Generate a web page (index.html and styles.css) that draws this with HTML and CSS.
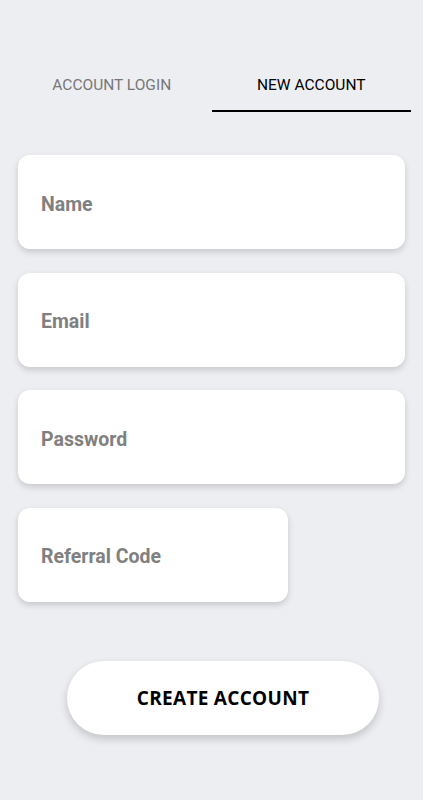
FILE: index.html
```html
<!DOCTYPE html>
<html lang="en">
<head>
<meta charset="utf-8">
<title>New Account</title>
<link rel="stylesheet" href="styles.css">
</head>
<body>
<div class="page">
  <nav class="tabs">
    <div class="tab">ACCOUNT LOGIN</div>
    <div class="tab tab-active">NEW ACCOUNT</div>
  </nav>
  <form class="form">
    <input class="field" type="text" placeholder="Name">
    <input class="field" type="email" placeholder="Email">
    <input class="field" type="password" placeholder="Password">
    <input class="field field-short" type="text" placeholder="Referral Code">
    <button class="submit" type="button">CREATE ACCOUNT</button>
  </form>
</div>
</body>
</html>
```
FILE: styles.css
```css
html, body {
  margin: 0;
  padding: 0;
  background: #edeef2;
}
.page {
  width: 423px;
  min-height: 800px;
  box-sizing: border-box;
  padding-top: 60px;
  font-family: Roboto, "Liberation Sans", sans-serif;
}
.tabs {
  display: flex;
  padding: 0 12px;
}
.tab {
  flex: 1;
  text-align: center;
  font-size: 15.5px;
  line-height: 18px;
  padding: 16px 0;
  color: #777777;
  border-bottom: 2px solid transparent;
}
.tab-active {
  color: #000000;
  border-bottom-color: #000000;
}
.form {
  display: flex;
  flex-direction: column;
  align-items: flex-start;
  gap: 23.67px;
  padding: 43px 18px 0;
}
.field {
  display: block;
  width: 100%;
  height: 94px;
  box-sizing: border-box;
  border: none;
  outline: none;
  border-radius: 12px;
  background: #ffffff;
  box-shadow: 0 3px 6px rgba(0, 0, 0, 0.16);
  padding: 4px 23px 0;
  font-family: Roboto, "Liberation Sans", sans-serif;
  font-weight: 700;
  font-size: 19.5px;
  color: #333;
}
.field::placeholder {
  color: #808080;
  opacity: 1;
}
.field-short {
  width: 270px;
}
.submit {
  margin-top: 35px;
  margin-left: 49px;
  width: 312px;
  height: 74px;
  border: none;
  border-radius: 37px;
  background: #ffffff;
  box-shadow: 0 4px 8px rgba(0, 0, 0, 0.18);
  font-family: "Open Sans", "Liberation Sans", sans-serif;
  font-weight: 700;
  font-size: 19px;
  color: #000000;
  letter-spacing: 0.3px;
}
```
